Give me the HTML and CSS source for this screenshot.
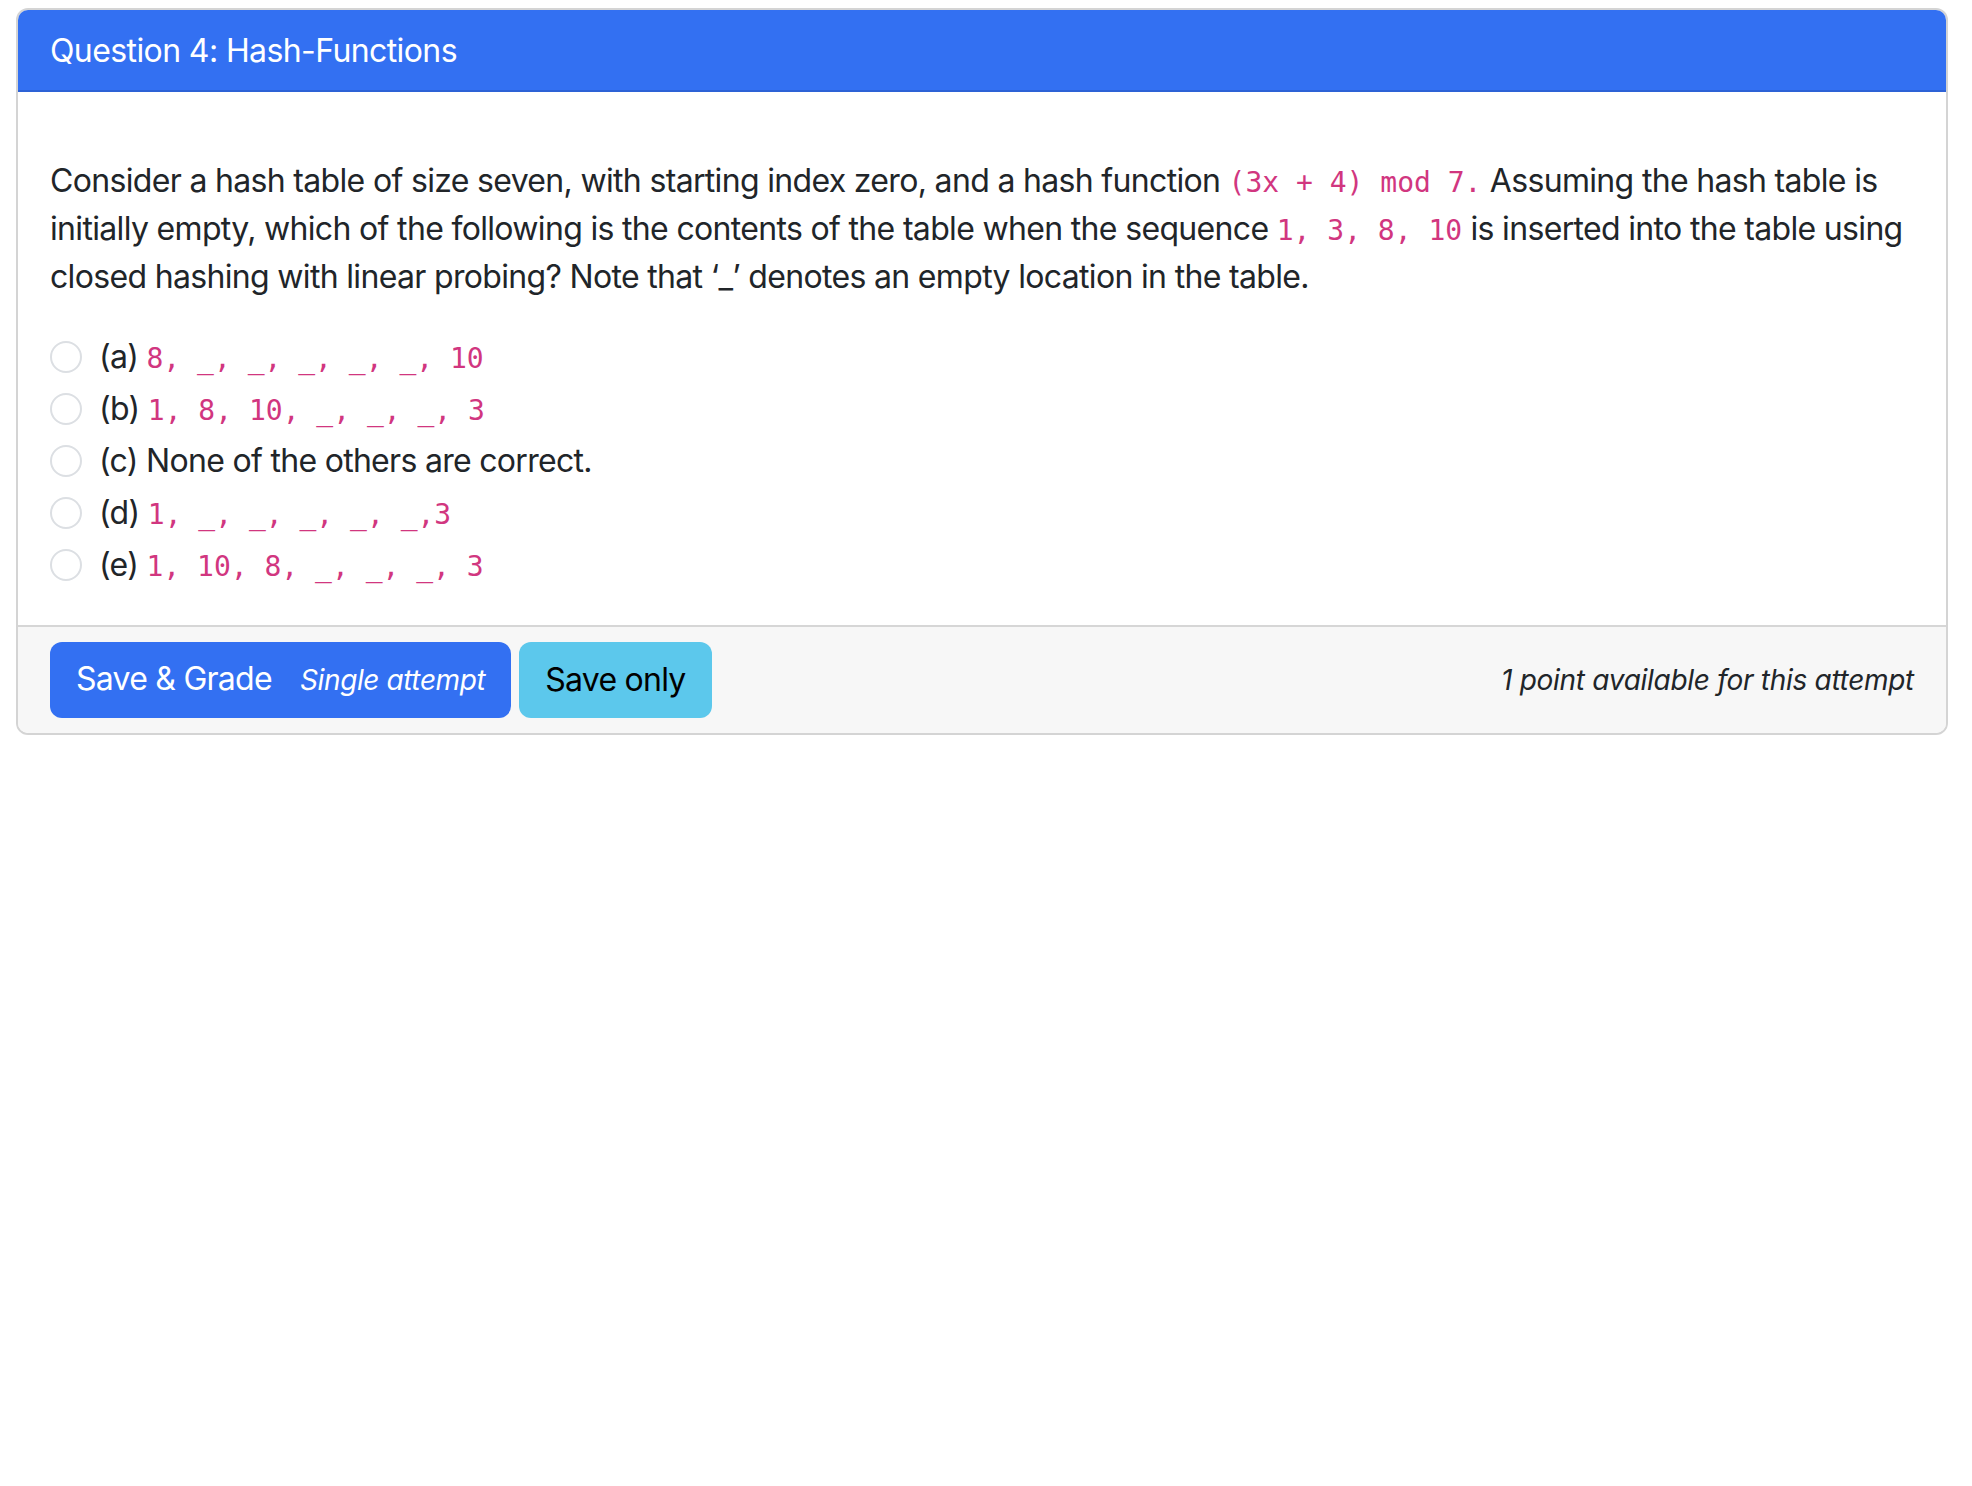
FILE: index.html
```html
<!DOCTYPE html>
<html lang="en">
<head>
<meta charset="utf-8">
<title>Question 4: Hash-Functions</title>
<link rel="stylesheet" href="styles.css">
</head>
<body>
<div class="card">
  <div class="card-header">Question 4: Hash-Functions</div>
  <div class="card-body">
    <p class="question">Consider a hash table of size seven, with starting index zero, and a hash function <code>(3x + 4) mod 7.</code> Assuming the hash table is initially empty, which of the following is the contents of the table when the sequence <code>1, 3, 8, 10</code> is inserted into the table using closed hashing with linear probing? Note that ‘_’ denotes an empty location in the table.</p>
    <div class="options">
      <label class="option"><input type="radio" name="ans" class="radio"><span class="label">(a) <code>8, _, _, _, _, _, 10</code></span></label>
      <label class="option"><input type="radio" name="ans" class="radio"><span class="label">(b) <code>1, 8, 10, _, _, _, 3</code></span></label>
      <label class="option"><input type="radio" name="ans" class="radio"><span class="label">(c) None of the others are correct.</span></label>
      <label class="option"><input type="radio" name="ans" class="radio"><span class="label">(d) <code>1, _, _, _, _, _,3</code></span></label>
      <label class="option"><input type="radio" name="ans" class="radio"><span class="label">(e) <code>1, 10, 8, _, _, _, 3</code></span></label>
    </div>
  </div>
  <div class="card-footer">
    <div class="buttons">
      <button class="btn btn-primary">Save &amp; Grade <span class="attempt">Single attempt</span></button>
      <button class="btn btn-info">Save only</button>
    </div>
    <div class="points">1 point available for this attempt</div>
  </div>
</div>
</body>
</html>
```

FILE: styles.css
```css
body {
  margin: 8px 24px 0 16px;
  font-family: Inter, "Liberation Sans", sans-serif;
  font-size: 32px;
  line-height: 1.5;
  color: #212529;
  background: #ffffff;
}

.card {
  border: 2px solid #d4d4d4;
  border-radius: 12px;
  overflow: hidden;
}

.card-header {
  background: #3370f2;
  color: #ffffff;
  padding: 17px 32px 15px;
  border-bottom: 2px solid #2d62d6;
  letter-spacing: -0.6px;
}

.card-body {
  padding: 65px 32px 36px;
}

.question {
  margin: 0 0 32px;
  letter-spacing: -0.67px;
}

code {
  font-family: "DejaVu Sans Mono", monospace;
  font-size: 28px;
  color: #d1367f;
  letter-spacing: 0;
}

.options {
  display: flex;
  flex-direction: column;
}

.option {
  display: flex;
  align-items: flex-start;
  min-height: 48px;
  margin-bottom: 4px;
  letter-spacing: -0.7px;
}

.option:last-child {
  margin-bottom: 0;
}

.radio {
  appearance: none;
  -webkit-appearance: none;
  width: 32px;
  height: 32px;
  margin: 8px 17px 0 0;
  border: 2px solid #dcdfe3;
  border-radius: 50%;
  background: #ffffff;
  flex: none;
}

.card-footer {
  background: #f7f7f7;
  border-top: 2px solid #d6d6d6;
  padding: 15px 32px;
  display: flex;
  align-items: center;
  justify-content: space-between;
}

.buttons {
  display: flex;
  gap: 8px;
}

.btn {
  font-family: inherit;
  font-size: 32px;
  line-height: 48px;
  padding: 11px 24px 12px;
  border: 2px solid transparent;
  border-radius: 12px;
  letter-spacing: -0.75px;
}

.btn-primary {
  background: #3370f2;
  color: #ffffff;
}

.btn-info {
  background: #5cc8ec;
  color: #000000;
}

.attempt {
  font-style: italic;
  font-size: 28px;
  margin-left: 20px;
  letter-spacing: -0.4px;
}

.points {
  font-style: italic;
  font-size: 28px;
  letter-spacing: -0.3px;
}
```
